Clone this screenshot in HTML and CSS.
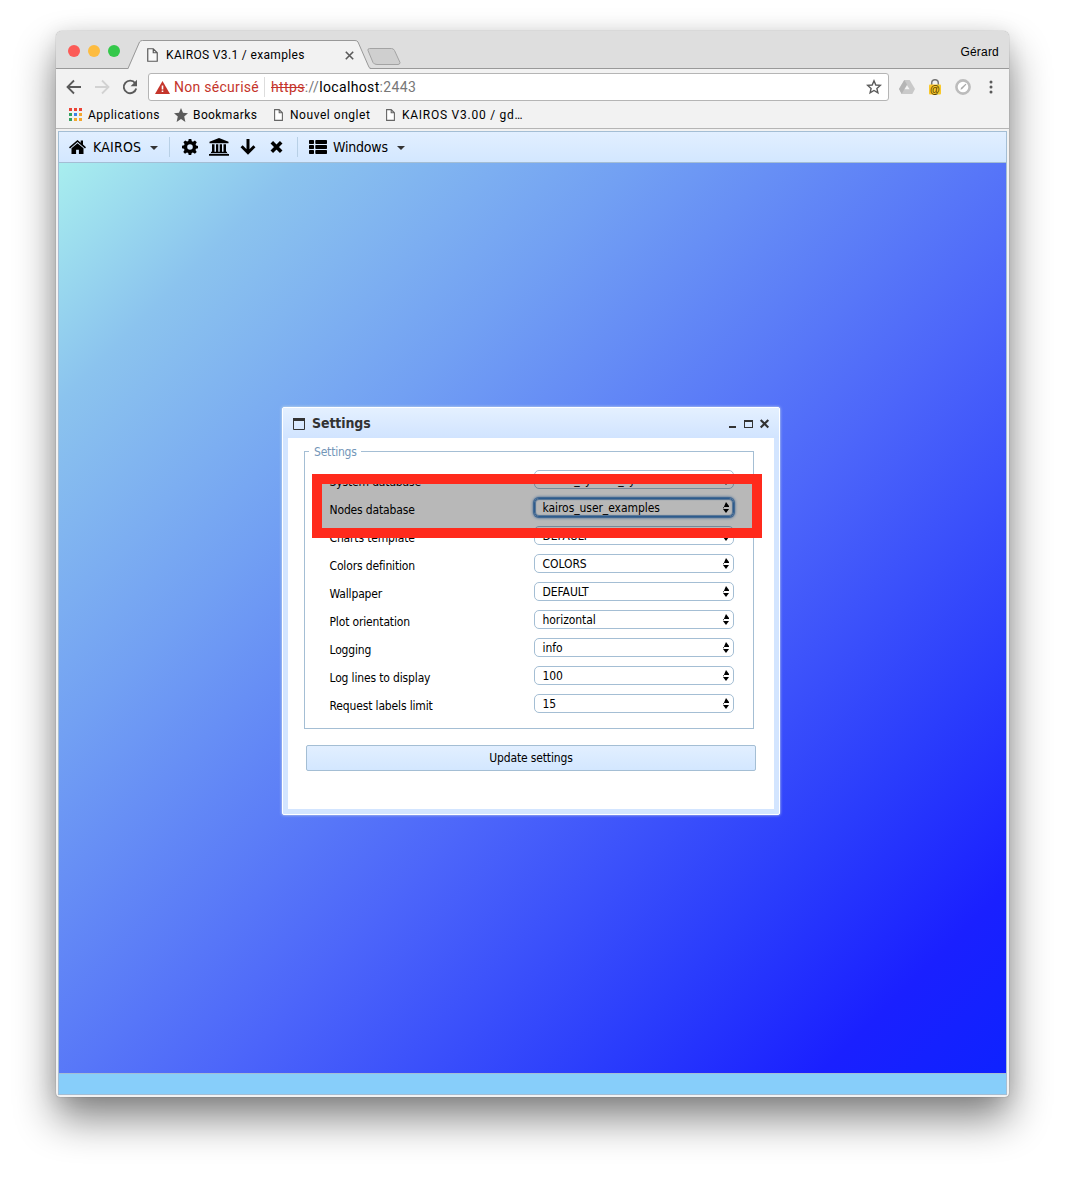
FILE: index.html
```html
<!DOCTYPE html>
<html lang="fr">
<head>
<meta charset="utf-8">
<title>KAIROS V3.1 / examples</title>
<link rel="stylesheet" href="styles.css">
</head>
<body>
<div class="browser">
  <header class="tabstrip">
    <div class="lights"><i class="red"></i><i class="amber"></i><i class="green"></i></div>
    <div class="tab">
      <svg class="tab-shape" width="274" height="38" viewBox="0 0 274 38"><path d="M-1 38 L1 34 L11 11 Q12 9.500 14 9.500 H226 Q228 9.500 229 11 L239 34 L241 38Z" fill="#f2f2f2"/><path d="M-1 37.500 L.5 34 L10.500 11 Q11.500 9.500 13.500 9.500 H226 Q228 9.500 229 11 L239 34 Q240 37.500 242 37.500" fill="none" stroke="#999"/><path d="M240.500 17.500h22q2 0 3 2l5.500 12q0 2-2 2h-21q-3 0-4-2l-5-12q-.5-2 1.500-2z" fill="#cfcfcf" stroke="#a3a3a3"/></svg>
      <div class="tab-content">
        <svg class="page-icon" width="11" height="14" viewBox="0 0 11 14"><path d="M.75.75h5.500l4 4v8.500H.75zM6.250.75v4h4" fill="#f8f8f8" stroke="#5a5a5a" stroke-width="1.200"/></svg>
        <span class="tab-title">KAIROS V3.1 / examples</span>
        <svg class="tab-close" width="9" height="9" viewBox="0 0 9 9"><path d="M.8.8l7.400 7.400M8.200.8L.8 8.200" stroke="#5a5a5a" stroke-width="1.600"/></svg>
      </div>
    </div>
    <span class="user">Gérard</span>
  </header>
  <div class="navbar">
    <svg width="16" height="16" viewBox="0 0 16 16"><path d="M15 8H2M8 1.500L1.500 8 8 14.500" fill="none" stroke="#5a5a5a" stroke-width="1.800"/></svg>
    <svg width="16" height="16" viewBox="0 0 16 16"><path d="M1 8h13M8 1.500L14.500 8 8 14.500" fill="none" stroke="#d2d2d2" stroke-width="1.800"/></svg>
    <svg width="16" height="16" viewBox="0 0 16 16"><path d="M13.200 4.200A6.300 6.300 0 1 0 14.200 9.500" fill="none" stroke="#5a5a5a" stroke-width="1.900"/><path d="M15 .8v6.400H8.600z" fill="#5a5a5a"/></svg>
    <div class="address">
      <svg width="15" height="13" viewBox="0 0 15 13"><path d="M7.500 0L15 13H0z" fill="#c5352b"/><path d="M6.700 4.500h1.600v4H6.700zm0 5h1.600v1.600H6.700z" fill="#fff"/></svg>
      <span class="insecure">Non sécurisé</span>
      <span class="url"><s>https</s>://<b>localhost</b>:2443</span>
      <svg class="star" width="16" height="16" viewBox="0 0 16 16"><path d="M8 1.800l1.800 4.200 4.500.4-3.400 3 1 4.400L8 11.500l-3.900 2.300 1-4.400-3.400-3 4.500-.4z" fill="none" stroke="#5a5a5a" stroke-width="1.400"/></svg>
    </div>
    <div class="extensions">
      <svg width="16" height="14" viewBox="0 0 16 14"><path d="M5.300 0h5.400L16 9l-2.700 5H2.700L0 9z" fill="#c9c9c9"/><path d="M5.300 0L0 9l2.700 5L8 4.500z" fill="#b5b5b5"/><path d="M8 5.200l2.500 4H5.500z" fill="#f4f4f4"/></svg>
      <svg width="12" height="16" viewBox="0 0 12 16"><path d="M2.700 7V4a3.300 3.300 0 0 1 6.600 0v3" fill="none" stroke="#777" stroke-width="1.500"/><rect x="0" y="5.500" width="12" height="10" rx="1" fill="#f9c92c"/><text class="at" x="6" y="13.500" text-anchor="middle">@</text></svg>
      <svg width="16" height="16" viewBox="0 0 16 16"><circle cx="8" cy="8" r="6.600" fill="#fff" stroke="#bcbcbc" stroke-width="2.600"/><path d="M5.500 10.700l.6-2 4.500-4 .8.800-4.200 4.500z" fill="#aaa"/></svg>
      <svg class="dots" width="4" height="14" viewBox="0 0 4 14"><g fill="#5a5a5a"><circle cx="2" cy="2" r="1.500"/><circle cx="2" cy="7" r="1.500"/><circle cx="2" cy="12" r="1.500"/></g></svg>
    </div>
  </div>
  <nav class="bookmarks">
    <svg class="apps" width="13" height="13" viewBox="0 0 13 13"><path d="M0 0h3v3H0zM5 0h3v3H5zM10 0h3v3h-3z" fill="#ea4335"/><path d="M0 5h3v3H0zM0 10h3v3H0z" fill="#34a060"/><path d="M5 5h3v3H5z" fill="#3b82e8"/><path d="M10 5h3v3h-3zM5 10h3v3H5zM10 10h3v3h-3z" fill="#f3a72e"/></svg>
    <span class="bm-apps">Applications</span>
    <svg class="bm-star" width="14" height="14" viewBox="0 0 14 14"><path d="M7 0l2 4.800 5 .4-3.800 3.300L11.400 14 7 11.100 2.600 14l1.200-5.500L0 5.200l5-.4z" fill="#5a5a5a"/></svg>
    <span class="bm-marks">Bookmarks</span>
    <svg class="bm-page" width="9" height="12" viewBox="0 0 9 12"><path d="M.6.600h4.600l3.200 3.200v7.600H.6zM5.200.6v3.200h3.200" fill="#fff" stroke="#666" stroke-width="1.100"/></svg>
    <span class="bm-new">Nouvel onglet</span>
    <svg class="bm-page" width="9" height="12" viewBox="0 0 9 12"><path d="M.6.600h4.600l3.200 3.200v7.600H.6zM5.200.6v3.200h3.200" fill="#fff" stroke="#666" stroke-width="1.100"/></svg>
    <span class="bm-kairos">KAIROS V3.00 / gd…</span>
  </nav>
  <main class="app">
    <div class="menu">
      <svg class="home" width="17" height="14" viewBox="0 0 17 14"><path d="M8.500 0L0 7.200l1 1.200 7.500-6.300L16 8.400l1-1.200-3-2.600V.5h-2.300v2.200z"/><path d="M8.500 3.200l-6 5V14h4.600V9.700h2.800V14h4.600V8.200z"/></svg>
      <span class="brand">KAIROS</span><i class="caret"></i><i class="divider"></i>
      <svg class="gear" width="16" height="16" viewBox="0 0 16 16"><path fill-rule="evenodd" d="M6.700 0h2.600l.5 2.200 1.200.5 1.900-1.200 1.900 1.800-1.200 2 .5 1.200L16 7v2.300l-2 .5-.5 1.200 1.200 1.900-1.800 1.800-2-1.200-1.200.5L9.200 16H6.700l-.5-2-1.200-.5-2 1.200-1.700-1.800L2.500 11 2 9.700 0 9.200V6.800l2.100-.5.500-1.200-1.200-1.900 1.800-1.800 1.900 1.200 1.200-.5zM8 5.200a2.800 2.800 0 1 0 0 5.600 2.800 2.800 0 0 0 0-5.600z"/></svg>
      <svg class="bank" width="20" height="18" viewBox="0 0 20 18"><path d="M10 0l9.500 3.700v1.500H.5V3.700zM3 6.200h2.500v7.600H7V6.200h2.300v7.600h1.400V6.200H13v7.600h1.500V6.200H17v7.600h1v1.300H2v-1.300h1zM1 15.800h18V16h1v1.700H0V16h1z"/></svg>
      <svg class="down" width="16" height="16" viewBox="0 0 16 16"><path d="M8 0v13M1.600 7.300L8 13.700l6.400-6.400" fill="none" stroke="#000" stroke-width="3"/></svg>
      <svg class="cross" width="13" height="12" viewBox="0 0 13 12"><path d="M1.800 1.300l9.400 9.400m0-9.400l-9.400 9.400" stroke="#000" stroke-width="3.600"/></svg>
      <i class="divider last"></i>
      <svg class="list" width="18" height="14" viewBox="0 0 18 14"><g><rect width="5" height="3.900" rx=".7"/><rect x="6.300" width="11.700" height="3.900" rx=".7"/><rect y="5" width="5" height="3.900" rx=".7"/><rect x="6.300" y="5" width="11.700" height="3.900" rx=".7"/><rect y="10" width="5" height="3.900" rx=".7"/><rect x="6.300" y="10" width="11.700" height="3.900" rx=".7"/></g></svg>
      <span class="windows">Windows</span><i class="caret"></i>
    </div>
    <div class="wallpaper">
      <section class="dialog">
        <div class="dialog-head">
          <svg width="12" height="12" viewBox="0 0 12 12"><path d="M.5.500h11v11H.5z" fill="none" stroke="#333"/><path d="M0 0h12v3H0z" fill="#333"/></svg>
          <h1>Settings</h1>
          <svg class="controls" width="41" height="12" viewBox="0 0 41 12"><path d="M0 8h7v2H0zM15 2h9v8H15zm1 2v5h7V4z" fill="#333" fill-rule="evenodd"/><path d="M31.700 2l7.600 7.600m0-7.600l-7.600 7.600" stroke="#333" stroke-width="2.100"/></svg>
        </div>
        <div class="dialog-body">
          <fieldset>
            <legend>Settings</legend>
            <div class="row"><label>System database</label><div class="select">kairos_system_system</div></div>
            <div class="row"><label>Nodes database</label><div class="select focused">kairos_user_examples</div></div>
            <div class="row"><label>Charts template</label><div class="select">DEFAULT</div></div>
            <div class="row"><label>Colors definition</label><div class="select">COLORS</div></div>
            <div class="row"><label>Wallpaper</label><div class="select">DEFAULT</div></div>
            <div class="row"><label>Plot orientation</label><div class="select">horizontal</div></div>
            <div class="row"><label>Logging</label><div class="select">info</div></div>
            <div class="row"><label>Log lines to display</label><div class="select">100</div></div>
            <div class="row"><label>Request labels limit</label><div class="select">15</div></div>
            <div class="highlight"></div>
          </fieldset>
          <button>Update settings</button>
        </div>
      </section>
    </div>
    <footer></footer>
  </main>
</div>
</body>
</html>
```
FILE: styles.css
```css
* { box-sizing: border-box; }
body { margin: 0; height: 1177px; padding: 31px 56px 0; overflow: hidden; background: #fff; font-family: Roboto, sans-serif; }
svg { display: block; flex: none; }
.browser { width: 953px; height: 1066px; display: flex; flex-direction: column; border-radius: 6px 6px 4px 4px; background: #f2f2f2; box-shadow: 0 0 1px rgba(0,0,0,.55), 0 22px 40px rgba(0,0,0,.48), 0 2px 20px rgba(0,0,0,.1); }

.tabstrip { height: 38px; flex: none; display: flex; border-bottom: 1px solid #999; border-radius: 6px 6px 0 0; background: #dedede; }
.lights { display: flex; gap: 8px; padding: 14px 0 0 12px; width: 73px; flex: none; }
.lights i { width: 12px; height: 12px; border-radius: 50%; }
.red { background: #fc5b57; }
.amber { background: #fdbc40; }
.green { background: #34c84a; }
.tab { display: grid; width: 274px; height: 38px; }
.tab-shape, .tab-content { grid-area: 1 / 1; }
.tab-shape { overflow: visible; }
.tab-content { display: flex; align-items: center; padding: 10px 0 0 18px; height: 38px; }
.tab-title { font-size: 12px; letter-spacing: .35px; width: 138px; margin-left: 8px; white-space: nowrap; }
.tab-close { margin-left: 41px; }
.user { margin: 13px 10px 0 auto; font: 12px/16px "Liberation Sans", sans-serif; letter-spacing: .2px; }

.navbar { height: 36px; flex: none; display: flex; align-items: center; gap: 12px; padding-left: 10px; }
.address { width: 741px; height: 28px; margin-left: -2px; display: flex; align-items: center; padding: 0 6px; border: 1px solid #b5b5b5; border-radius: 3px; background: #fff; font-size: 14px; }
.insecure { margin-left: 4px; padding-right: 6px; width: 91px; border-right: 1px solid #ddd; color: #c5352b; letter-spacing: .28px; white-space: nowrap; line-height: 20px; }
.url { margin-left: 6px; color: #777; letter-spacing: .35px; }
.url s { color: #c5352b; }
.url b { font-weight: 400; color: #000; }
.star { margin-left: auto; }
.extensions { display: flex; align-items: center; gap: 14px; margin-left: -2px; }
.dots { margin-left: 4px; }
.at { font: bold 10px "Liberation Sans", sans-serif; fill: #5a4300; }

.bookmarks { height: 24px; flex: none; display: flex; align-items: center; padding: 0 0 4px 13px; border-bottom: 1px solid #b5b5b5; font-size: 12px; letter-spacing: .45px; white-space: nowrap; }
.bm-apps { margin-left: 6px; width: 73px; }
.bm-star { margin-left: 13px; }
.bm-marks { margin-left: 5px; width: 66px; letter-spacing: .4px; }
.bm-page { margin-left: 15px; }
.bm-new { margin-left: 7px; width: 81px; letter-spacing: .54px; }
.bm-kairos { margin-left: 7px; letter-spacing: .75px; }

.app { width: 949px; height: 964px; margin: 2px 0 0 2px; display: flex; flex-direction: column; border: 1px solid #a4bed4; font-family: "DejaVu Sans Condensed", "DejaVu Sans", sans-serif; font-stretch: condensed; }
.menu { height: 31px; flex: none; display: flex; align-items: center; padding-left: 10px; border-bottom: 1px solid #a4bed4; background: linear-gradient(#e2efff, #d3e7ff); font-size: 14px; }
.brand { margin-left: 7px; width: 50px; letter-spacing: .2px; }
.caret { margin: 2px 0 0 7px; border: 4px solid transparent; border-top-color: #333; border-bottom: 0; }
.divider { width: 1px; height: 20px; margin-left: 11px; background: #b8d0e6; }
.gear { margin-left: 12px; }
.bank { margin-left: 11px; }
.down { margin-left: 11px; }
.cross { margin-left: 14px; }
.divider.last { margin-left: 14px; }
.list { margin-left: 11px; }
.windows { margin-left: 6px; width: 57px; letter-spacing: -.2px; }
.wallpaper { height: 910px; flex: none; display: flex; justify-content: center; align-items: flex-start; padding: 244px 3px 0 0; background: linear-gradient(135deg, #a8eeee 0%, #8bc3ee 13%, #72a0f3 31%, #4c65fa 58%, #2a3cfc 78%, #1a20ff 90%, #0e22ff 100%); }
.app footer { flex: 1; border-top: 1px solid #a4bed4; background: #87cefa; }

.dialog { width: 498px; height: 408px; padding: 0 5px 5px; border: 1px solid #fff; border-radius: 2px; background: #d3e5ff; box-shadow: 0 0 3px #d7e6e6; }
.dialog-head { height: 30px; display: flex; align-items: center; margin: 0 -5px; padding: 2px 9px 0 10px; background: linear-gradient(#e4f0ff, #d1e4ff); color: #333; }
h1 { margin: 0 0 2px 7px; font: bold 14px "DejaVu Sans Condensed", "DejaVu Sans", sans-serif; font-stretch: condensed; letter-spacing: -.1px; }
.controls { margin-left: auto; }
.dialog-body { height: 371px; padding: 6px 17px 0 16px; background: #fff; font-size: 12px; }
fieldset { position: relative; width: 450px; height: 285px; margin: 0; padding: 12px 0 0 24px; border: 1px solid #a4bed4; min-width: 0; }
legend { height: 14px; margin-left: -20px; padding: 0 4px 0 5px; line-height: 16px; color: #7396b8; letter-spacing: -.2px; }
.row { display: flex; height: 28px; letter-spacing: -.15px; }
.row label { width: 205px; padding: 4px 0 0 .5px; line-height: 16px; }
.select { width: 200px; height: 19px; padding-left: 7.500px; line-height: 18px; border: 1px solid #a4bed4; border-radius: 5px; display: flex; justify-content: space-between; letter-spacing: -.06px; }
.select::after { content: ""; width: 6px; height: 11px; margin: 3px 4px 0 0; background: #000; clip-path: polygon(50% 0, 100% 4px, 100% 5px, 0 5px, 0 4px, 50% 0, 0 4px, 0 7px, 100% 7px, 50% 100%, 0 7px); }
.select.focused { border-color: #3f7fc4; box-shadow: 0 0 0 1px #5c90c9, 0 0 3px 1px #4c88cc, inset 0 0 1px 1px #6f9ccd; }
.highlight { position: absolute; left: 7px; top: 16px; width: 450px; height: 64px; border: 10px solid #ff2a1c; background: rgba(0,0,0,.28); }
button { display: block; width: 450px; height: 26px; margin: 16px 0 0 2px; padding: 0; border: 1px solid #a4bed4; border-radius: 2px; background: linear-gradient(#e2efff, #d3e7ff); color: #000; font: 12px "DejaVu Sans Condensed", "DejaVu Sans", sans-serif; font-stretch: condensed; letter-spacing: -.15px; }
```
